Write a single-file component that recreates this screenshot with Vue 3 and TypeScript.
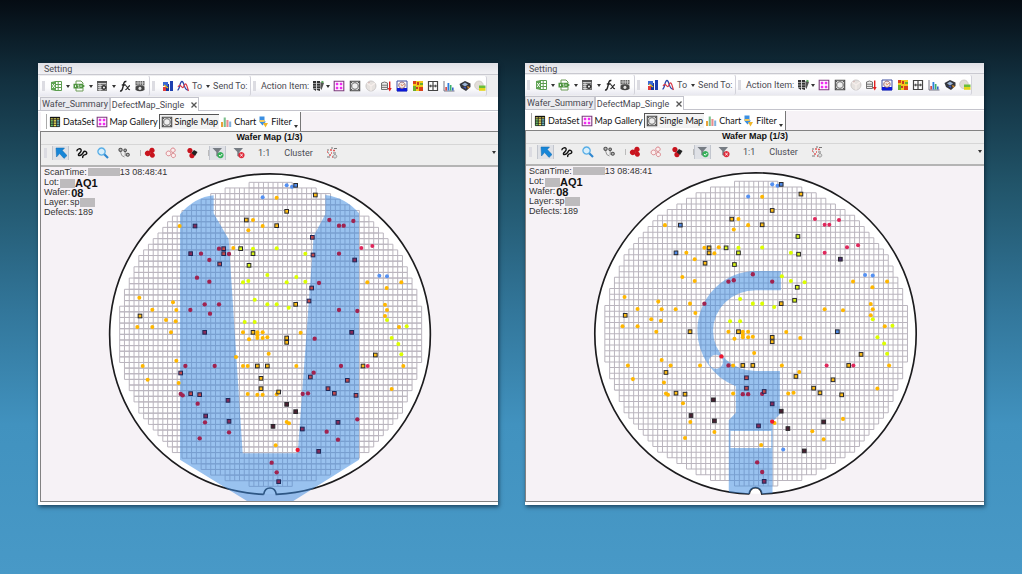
<script setup lang="ts">
interface Shape { d: string; f?: string; s?: string; w?: number }
type Point = [number, number, string]

const icons: Record<string, Shape[]> = {
  excel: [
    { d: 'M5 1.5H11.5V10.5H5Z M8.2 1.5V10.5 M5 4.5H11.5 M5 7.5H11.5', f: '#fff', s: '#5d9c50', w: 1 },
    { d: 'M1 2L6 1V11L1 10Z', f: '#5fa353' },
    { d: 'M2.2 4L4.8 8 M4.8 4L2.2 8', s: '#fff', w: 0.9 },
  ],
  export: [
    { d: 'M3 4V1H8L10 3V4 M3 8V11H10V8', f: '#fff', s: '#6a9a55', w: 1 },
    { d: 'M0.5 3.8H9.5L11.8 6L9.5 8.4H0.5Z', f: '#4f9440' },
    { d: 'M2.5 5.2V7 M4.6 5.2H6.2 M5 7H6.5 M8 5.2V7', s: '#fff', w: 0.9 },
  ],
  sheet: [
    { d: 'M1 1H11V11H1Z', f: '#777' },
    { d: 'M2 3.5H10 M2 5.5H10 M2 7.5H10 M2 9.5H10 M4 1V11', s: '#e8e8e8', w: 0.7 },
    { d: 'M1 1H11V3H1Z', f: '#555' },
    { d: 'M8 5A2.5 2.5 0 1 1 7.9 5Z', f: '#333' },
    { d: 'M8 6.6A1 1 0 1 1 7.9 6.6Z', f: '#eee' },
  ],
  fx: [
    { d: 'M1 11C3 11.5 3.5 9 4.2 6C4.8 3 5.2 1 7.4 1.5 M2.8 5H6.8', s: '#222', w: 1.4 },
    { d: 'M6.5 5.8C8.5 5.3 8.7 10.5 11 9.6 M11 5.6C9.5 5.5 8.2 9.8 6.3 9.8', s: '#222', w: 1.1 },
  ],
  view: [
    { d: 'M1.5 1H10.5V5.5H1.5Z', f: '#666' },
    { d: 'M2 3H10 M4 1V5 M6.3 1V5 M8.5 1V5', s: '#ddd', w: 0.7 },
    { d: 'M1.5 6.5Q6 4 10.5 6.5V10Q6 12.5 1.5 10Z', f: '#444' },
    { d: 'M6 6.8A1.6 1.6 0 1 1 5.9 6.8Z', f: '#ddd' },
  ],
  bars: [
    { d: 'M1 7H4V11H1Z', f: '#e23b3b' }, { d: 'M4 4H7V11H4Z', f: '#15359b' },
    { d: 'M8 1H11V11H8Z', f: '#1c3fb0' }, { d: 'M1 2H6V6H1Z', f: '#3b69d4' },
    { d: 'M2 5L6 8', s: '#e8c02a', w: 1.2 },
  ],
  curve: [
    { d: 'M0.5 10C3 10 2.5 1.5 5 1.5S6.5 10 11 10', s: '#2b46a8', w: 1.3 },
    { d: 'M1 7C4 2 5 11 7 6S10 6 11.5 11', s: '#d93a48', w: 1.2 },
  ],
  plates: [
    { d: 'M1 1H4V11L1 9Z M4.8 1H8V11L4.8 10Z', f: '#333' },
    { d: 'M1 3.5H8 M1 6H8 M1 8.5H8', s: '#ddd', w: 0.6 },
    { d: 'M8.5 2L12 3L9.5 10L8.3 8Z', f: '#555' }, { d: 'M9.5 1.5L11.5 2.5', s: '#4a9a4a', w: 1.4 },
  ],
  gallery: [
    { d: 'M1.2 1.2H10.8V10.8H1.2Z', f: '#fff', s: '#7d3a7d', w: 1.1 },
    { d: 'M2.8 2.8H5.3V5.3H2.8Z M6.8 2.8H9.3V5.3H6.8Z M2.8 6.8H5.3V9.3H2.8Z M6.8 6.8H9.3V9.3H6.8Z', f: '#f22af2' },
  ],
  single: [
    { d: 'M1.3 1.3H10.7V10.7H1.3Z', f: '#d4d4d4', s: '#4a4a4a', w: 1.1 },
    { d: 'M6 2.7A3.3 3.3 0 1 1 5.9 2.7Z', f: '#eee', s: '#666', w: 1 },
    { d: 'M2 2H3V3H2Z M9 2H10V3H9Z M2 9H3V10H2Z M9 9H10V10H9Z', f: '#555' },
  ],
  disc: [
    { d: 'M6 1A5 5 0 1 1 5.9 1Z', f: '#e6e2df', s: '#c2bebe', w: 0.8 },
    { d: 'M6 6L2 3M6 6L10 3M6 6V11', s: '#f6eeec', w: 1.2 }, { d: 'M3 3L5 2', s: '#c9a0a0', w: 0.7 },
  ],
  stack: [
    { d: 'M1.5 3Q4.5 1 7.5 3V9.5H1.5Z M1.5 5.2H7.5 M1.5 7.4H7.5', f: '#ececec', s: '#666', w: 0.9 },
    { d: 'M9.7 1.5V9', s: '#e02020', w: 1.4 }, { d: 'M7.7 8H11.7L9.7 11.5Z', f: '#e02020' },
  ],
  region: [
    { d: 'M1 1H11V11H1Z', f: '#fff', s: '#3c4ca0', w: 1 }, { d: 'M1 8H11V11.3H1Z', f: '#0c18d8' },
    { d: 'M6 2A3.2 3.2 0 1 1 5.9 2Z', f: '#f1e5e2', s: '#8a5a68', w: 0.9 }, { d: 'M5 4L6 6L8 4', s: '#e08a5a', w: 0.8 },
  ],
  heat: [
    { d: 'M1 1H11V11H1Z', f: '#f2c81c' }, { d: 'M1 1H4V4H1Z M7 7H11V11H7Z', f: '#d9401c' },
    { d: 'M1 6H4V11H1Z M8 3H11V5H8Z', f: '#6bae2c' }, { d: 'M5 2H7V5H5Z M4 7H6V9H4Z', f: '#c43a20' },
  ],
  split: [
    { d: 'M1.5 1.5H10.5V10.5H1.5Z M6 1.5V10.5', f: '#fff', s: '#444', w: 1.2 },
    { d: 'M2 6H10 M3.7 4.7V7.3 M8.3 4.7V7.3', s: '#444', w: 1 },
  ],
  histogram: [
    { d: 'M1 1V11H11.5', s: '#667', w: 0.9 }, { d: 'M2.3 7H4V10.5H2.3Z', f: '#d84a4a' },
    { d: 'M4.5 3H6.3V10.5H4.5Z', f: '#2f7ddd' }, { d: 'M6.8 5H8.5V10.5H6.8Z', f: '#3aae6c' }, { d: 'M9 7.5H10.6V10.5H9Z', f: '#3763c8' },
  ],
  palette: [
    { d: 'M0.5 4L6 1L11.5 3.5V7L7 11L2 8Z', f: '#34373d' }, { d: 'M3 4.5L6 2.5L9 4.5L6 6.5Z', f: '#9bb4d6' },
    { d: 'M8 6L11 7L9 9Z', f: '#d88a2a' }, { d: 'M4 7H7V9Z', f: '#3b52c0' },
  ],
  layer: [
    { d: 'M5 1A4.3 4.3 0 1 1 4.9 1Z', f: '#e2ddd8', s: '#c6c0bc', w: 0.7 },
    { d: 'M5 5.5H11.5V8H5Z', f: '#6bbf3a' }, { d: 'M5 8H11.5V10.8H5Z', f: '#e4d51c' },
  ],
  dataset: [
    { d: 'M1 1H11V11H1Z', f: '#f1e65a' }, { d: 'M1 4.2H4.3V11H1Z', f: '#69c46a' }, { d: 'M7.6 4H11V11H7.6Z', f: '#69bcc4' },
    { d: 'M1.4 1.4H10.6V10.6H1.4Z M1 3.7H11 M1 6H11 M1 8.3H11 M4.3 1V11 M7.6 1V11', s: '#222', w: 0.8 },
    { d: 'M1 1.6H11', s: '#111', w: 1.4 },
  ],
  chart: [
    { d: 'M1 6H3V11H1Z', f: '#e8a23a' }, { d: 'M3.7 1.5H5.8V11H3.7Z', f: '#7cc08c' },
    { d: 'M6.4 4H8.5V11H6.4Z', f: '#e88d8d' }, { d: 'M9.2 5.5H11.2V11H9.2Z', f: '#7fb0dc' },
  ],
  filterdown: [
    { d: 'M2.5 0.5H7.5V5.5H9L5.5 9.5L2.5 6Z', f: '#3b8fe2' }, { d: 'M6 7H11L8.5 11.5Z', f: '#f0b62a' }, { d: 'M2.5 4H7.5V6H2.5Z', f: '#f2c95c' },
  ],
  pointer: [{ d: 'M1 1H9.5L7.3 3.5L12 8.6L9 11.4L4.6 6.6L1.5 10Z', f: '#1686d8', s: '#1069ae', w: 0.5 }],
  lasso: [
    { d: 'M0.8 4.2C1 1.6 4.8 0.8 5.2 3.2S2.6 6.2 2.4 7.6S4.2 9 6 7.2S7.4 3.6 9.4 4.4S11.2 7.2 9.4 7.6S6.2 9 6.8 11', s: '#111', w: 1.4 },
  ],
  zoom: [
    { d: 'M7 7L11 11', s: '#2e86cf', w: 2.2 }, { d: 'M4.6 1A3.6 3.6 0 1 1 4.5 1Z', f: '#d7eefb', s: '#58aee6', w: 1.3 },
  ],
  nodes: [
    { d: 'M2.6 1.2A1.6 1.6 0 1 1 2.5 1.2Z M7.2 2A1.3 1.3 0 1 1 7.1 2Z M9.8 6.2A1.5 1.5 0 1 1 9.7 6.2Z', f: '#bbb', s: '#555', w: 1.1 },
    { d: 'M2.6 5Q3 9.5 6.5 10 M7.2 5V9', s: '#888', w: 0.9 },
  ],
  blobs: [
    { d: 'M8 0.8A2.7 2.7 0 1 1 7.9 0.8Z M3.8 3.4A2.9 2.9 0 1 1 3.7 3.4Z M8.4 5.8A2.5 2.5 0 1 1 8.3 5.8Z', f: '#c8141e' },
  ],
  blobsline: [
    { d: 'M8 1A2.2 2.2 0 1 1 7.9 1Z M3.6 4A2.4 2.4 0 1 1 3.5 4Z M8.4 6.4A2.1 2.1 0 1 1 8.3 6.4Z', f: '#fbeeee', s: '#d9848a', w: 1 },
  ],
  blobsmix: [
    { d: 'M4 1A2.6 2.6 0 1 1 3.9 1Z M6 6A2.6 2.6 0 1 1 5.9 6Z', f: '#c8141e' },
    { d: 'M8 3L11.5 5L9 9L5.5 6Z', f: '#222' },
  ],
  funnelok: [
    { d: 'M0.5 1H10L6.5 5V10L4.3 9V5Z', f: '#777d84' }, { d: 'M8.5 5A3.1 3.1 0 1 1 8.4 5Z', f: '#36b05a' },
    { d: 'M7 8L8.2 9.3L10.2 7', s: '#fff', w: 1 },
  ],
  funnelno: [
    { d: 'M0.5 1H10L6.5 5V10L4.3 9V5Z', f: '#777d84' }, { d: 'M8.5 5A3.1 3.1 0 1 1 8.4 5Z', f: '#e02a3a' },
    { d: 'M7.3 7L9.7 9.3M9.7 7L7.3 9.3', s: '#fff', w: 1 },
  ],
  cluster: [
    { d: 'M1 3H3 M5 1H7 M8 1.5H11 M1 10H4 M7 6H10 M2 6H3', s: '#777', w: 1.2 },
    { d: 'M4 3H6 M7 3.5H9 M1 5H2 M5 6H6 M3 8H5 M6 10H7', s: '#e05a5a', w: 1.4 },
    { d: 'M9 7.5A1.8 1.8 0 1 1 8.9 7.5Z', f: '#ddd', s: '#888', w: 0.8 },
  ],
}

const mainIcons = ['excel', 'export', 'sheet']
const actionIcons = ['gallery', 'single', 'disc', 'stack', 'region', 'heat', 'split', 'histogram', 'palette', 'layer']
const views = [
  { icon: 'dataset', text: 'DataSet' },
  { icon: 'gallery', text: 'Map Gallery' },
  { icon: 'single', text: 'Single Map', on: true },
  { icon: 'chart', text: 'Chart' },
  { icon: 'filterdown', text: 'Filter', menu: true },
]
const tools = [
  { icon: 'pointer', on: true }, { icon: 'lasso' }, { icon: 'zoom' }, { icon: 'nodes', end: true },
  { icon: 'blobs' }, { icon: 'blobsline' }, { icon: 'blobsmix', end: true },
  { icon: 'funnelok', on: true }, { icon: 'funnelno' },
]

// Die grid: 63 x 54 dies, three map units per screen pixel.
const COLS = 63
const ROWS = 54
const DIE_W = 14.38
const DIE_H = 16.89
const GX = 236
const GY = 46
function dieGrid(): string {
  const cx = (COLS * DIE_W) / 2
  const cy = (ROWS * DIE_H) / 2
  const limit = 462
  let d = ''
  for (let r = 0; r < ROWS; r++) {
    const far = Math.max(Math.abs(r * DIE_H - cy), Math.abs((r + 1) * DIE_H - cy))
    const half = Math.sqrt(limit * limit - far * far)
    const skip = Math.max(0, Math.ceil((cx - half) / DIE_W - 0.05))
    const x0 = GX + skip * DIE_W
    const x1 = GX + (COLS - skip) * DIE_W
    const y0 = GY + r * DIE_H
    d += `M${x0} ${y0}H${x1}M${x0} ${y0 + DIE_H}H${x1}`
    for (let c = skip; c <= COLS - skip; c++) d += `M${GX + c * DIE_W} ${y0}v${DIE_H}`
  }
  return d
}
const grid = dieGrid()

// Each defect holds one class letter per map; capitals are drawn as marked dies.
const quadrants: { at: [number, number]; points: Point[] }[] = [
  {
    at: [-15, -21],
    points: [
      [680, 112, 'bb'], [631, 180, 'YY'], [651, 180, 'yy'], [431, 198, 'yy'], [477, 198, 'PB'], [680, 198, 'yy'],
      [637, 211, 'yy'], [549, 266, 'wy'], [563, 266, 'WY'], [592, 264, 'yy'], [614, 266, 'LL'], [651, 266, 'll'],
      [464, 281, 'PB'], [495, 281, 'wy'], [563, 281, 'WY'], [579, 282, 'wy'], [651, 281, 'LL'], [520, 300, 'wy'],
      [551, 312, 'WY'], [639, 316, 'LL'], [694, 345, 'lw'], [483, 353, 'wy'], [520, 365, 'wy'], [621, 367, 'lw'],
      [637, 363, 'lw'], [310, 413, 'yy'], [656, 419, 'll'], [411, 427, 'yy'], [506, 433, 'wy'], [549, 433, 'ww'],
      [694, 433, 'll'], [349, 449, 'yy'], [463, 450, 'wy'], [421, 450, 'yy'], [522, 461, 'wy'], [312, 468, 'YY'],
      [390, 480, 'yy'], [419, 484, 'yy'], [304, 501, 'yy'], [349, 501, 'yy'], [405, 517, 'yy'], [626, 486, 'll'],
      [656, 486, 'll'], [506, 517, 'PY'], [621, 517, 'yy'], [651, 517, 'YY'], [664, 517, 'yy'], [680, 517, 'yy'],
      [664, 526, 'yy'], [664, 534, 'yy'], [680, 534, 'yy'], [694, 532, 'yy'], [639, 538, 'yy'],
    ],
  },
  {
    at: [669, -21],
    points: [
      [68, 76, 'bb'], [84, 80, 'bb'], [95, 76, 'BB'], [38, 113, 'yy'], [154, 105, 'YY'], [68, 154, 'YY'],
      [38, 197, 'YY'], [196, 180, 'wr'], [268, 183, 'wr'], [225, 197, 'wr'], [239, 197, 'wr'], [145, 232, 'WL'],
      [38, 265, 'll'], [124, 281, 'll'], [147, 285, 'WL'], [225, 281, 'wr'], [292, 264, 'rr'], [325, 258, 'rr'],
      [272, 300, 'PD'], [97, 351, 'll'], [68, 367, 'lw'], [124, 365, 'll'], [165, 369, 'wl'], [143, 384, 'WL'],
      [346, 347, 'bb'], [369, 349, 'bb'], [310, 367, 'yy'], [412, 367, 'yy'], [368, 384, 'yy'], [135, 423, 'WL'],
      [38, 433, 'll'], [74, 443, 'll'], [95, 433, 'YY'], [363, 434, 'yy'], [369, 450, 'yy'], [363, 468, 'yy'],
      [369, 480, 'll'], [225, 450, 'wy'], [280, 453, 'wy'], [405, 501, 'yy'], [428, 499, 'll'], [110, 518, 'yy'],
      [263, 517, 'PB'], [68, 534, 'YY'], [152, 536, 'wy'], [383, 534, 'll'],
    ],
  },
  {
    at: [-15, 504],
    points: [
      [698, 56, 'yy'], [600, 66, 'yx'], [421, 77, 'yy'], [320, 93, 'yy'], [448, 93, 'wy'], [536, 93, 'wy'],
      [621, 93, 'yw'], [635, 93, 'yy'], [664, 93, 'YY'], [694, 93, 'YY'], [434, 114, 'WY'], [335, 134, 'yy'],
      [428, 144, 'yy'], [675, 130, 'YW'], [675, 161, 'YW'], [434, 177, 'wy'], [440, 181, 'wy'], [464, 176, 'WY'],
      [491, 179, 'WY'], [635, 177, 'yy'], [664, 179, 'yw'], [680, 179, 'yw'], [485, 206, 'wy'], [576, 196, 'PK'],
      [509, 243, 'PK'], [507, 262, 'wy'], [579, 259, 'PK'], [579, 292, 'wy'], [491, 310, 'wy'],
    ],
  },
  {
    at: [669, 504],
    points: [
      [68, 22, 'YY'], [403, 27, 'll'], [412, 58, 'll'], [334, 60, 'YY'], [97, 93, 'yy'], [231, 93, 'wr'],
      [297, 93, 'YY'], [311, 93, 'rr'], [418, 93, 'yy'], [149, 113, 'wy'], [139, 126, 'WY'], [250, 136, 'WY'],
      [192, 161, 'WY'], [211, 175, 'WY'], [276, 181, 'WY'], [383, 162, 'yy'], [38, 178, 'yw'], [44, 171, 'YW'],
      [116, 177, 'wy'], [132, 175, 'wy'], [68, 208, 'KP'], [95, 230, 'KK'], [280, 253, 'wy'], [75, 265, 'yy'],
      [68, 261, 'yx'], [222, 262, 'PK'], [27, 274, 'KP'], [115, 282, 'PK'], [188, 290, 'wy'], [222, 314, 'wy'],
      [35, 331, 'yy'], [101, 345, 'xb'], [164, 349, 'PK'], [23, 383, 'ww'], [38, 412, 'ww'], [44, 440, 'PP'],
    ],
  },
]

const dotFill: Record<string, string> = {
  y: '#ffb700', l: '#dcff00', b: '#5591f2', r: '#e0285c', w: '#a02350', x: '#ee1730',
}
const dieFill: Record<string, string> = {
  Y: '#ffbd14', L: '#d9f716', B: '#4f8be8', W: '#c24a4a', P: '#872a58', K: '#4a1f30', D: '#4b2d72',
}
const isDie = (k: string) => k in dieFill
const edge = (k: string) => ('WP'.includes(k) ? '#1f2858' : '#2a2a2e')

const panels = [
  {
    id: 'a',
    overlay:
      'M417 142Q462 90 518 85V139L563 217L605 859H770L818 207L853 142V84Q915 92 954 139V878L757 1002H618L417 878Z',
  },
  {
    id: 'b',
    overlay:
      'M763 314H688A175 179 0 0 0 513 493A175 179 0 0 0 628 659V739L607 761V977L669 982Q672 963 687 963T706 982L738 980V765L760 743V614H688A128 121 0 0 1 688 372H763Z' +
      'M612 793H734V844H612Z M568 565A21 21 0 1 0 569 565Z',
  },
]
</script>

<template>
  <main class="page">
    <section v-for="(p, i) in panels" :key="p.id" class="panel" :class="p.id">
      <div class="window">
        <header class="setting">Setting</header>

        <div class="strip">
          <div class="group first">
            <i class="grip"></i>
            <template v-for="n in mainIcons" :key="n">
              <button class="ib" :aria-label="n">
                <svg class="ic" viewBox="0 0 12 12"><path v-for="(s, k) in icons[n]" :key="k" :d="s.d" :fill="s.f || 'none'" :stroke="s.s || 'none'" :stroke-width="s.w || 0" /></svg>
              </button>
              <button class="caret" :aria-label="n + ' menu'"></button>
            </template>
            <button v-for="n in ['fx', 'view']" :key="n" class="ib" :aria-label="n">
              <svg class="ic" viewBox="0 0 12 12"><path v-for="(s, k) in icons[n]" :key="k" :d="s.d" :fill="s.f || 'none'" :stroke="s.s || 'none'" :stroke-width="s.w || 0" /></svg>
            </button>
          </div>
          <div class="group second">
            <i class="grip"></i>
            <button v-for="n in ['bars', 'curve']" :key="n" class="ib" :aria-label="n">
              <svg class="ic" viewBox="0 0 12 12"><path v-for="(s, k) in icons[n]" :key="k" :d="s.d" :fill="s.f || 'none'" :stroke="s.s || 'none'" :stroke-width="s.w || 0" /></svg>
            </button>
            <button class="tx">To</button>
            <button class="caret" aria-label="To menu"></button>
            <span class="tx">Send To:</span>
          </div>
          <div class="group third">
            <i class="grip"></i>
            <span class="tx">Action Item:</span>
            <button class="ib" aria-label="plates">
              <svg class="ic" viewBox="0 0 12 12"><path v-for="(s, k) in icons.plates" :key="k" :d="s.d" :fill="s.f || 'none'" :stroke="s.s || 'none'" :stroke-width="s.w || 0" /></svg>
            </button>
            <button class="caret" aria-label="plates menu"></button>
            <div class="actions">
              <button v-for="n in actionIcons" :key="n" class="ib" :aria-label="n">
                <svg class="ic" viewBox="0 0 12 12"><path v-for="(s, k) in icons[n]" :key="k" :d="s.d" :fill="s.f || 'none'" :stroke="s.s || 'none'" :stroke-width="s.w || 0" /></svg>
              </button>
            </div>
          </div>
        </div>

        <nav class="tabs" role="tablist">
          <button class="tab" role="tab" aria-selected="false">Wafer_Summary</button>
          <button class="tab active" role="tab" aria-selected="true">DefectMap_Single<svg class="close" viewBox="0 0 6 6"><path d="M0.5 0.5L5.5 5.5M5.5 0.5L0.5 5.5" stroke="#555" stroke-width="1.3" /></svg></button>
        </nav>

        <div class="views">
          <div class="viewbar">
            <button v-for="v in views" :key="v.text" class="view" :class="{ on: v.on }">
              <svg class="ic" viewBox="0 0 12 12"><path v-for="(s, k) in icons[v.icon]" :key="k" :d="s.d" :fill="s.f || 'none'" :stroke="s.s || 'none'" :stroke-width="s.w || 0" /></svg>
              <span>{{ v.text }}</span>
              <i v-if="v.menu" class="caretmark"></i>
            </button>
          </div>
        </div>

        <div class="body">
          <h2 class="title">Wafer Map (1/3)</h2>
          <div class="tools">
            <i class="grip"></i>
            <button v-for="t in tools" :key="t.icon" class="tool" :class="{ on: t.on, end: t.end }" :aria-label="t.icon">
              <svg class="ic" viewBox="0 0 12 12"><path v-for="(s, k) in icons[t.icon]" :key="k" :d="s.d" :fill="s.f || 'none'" :stroke="s.s || 'none'" :stroke-width="s.w || 0" /></svg>
            </button>
            <button class="word">1:1</button>
            <button class="word">Cluster</button>
            <button class="ib" aria-label="cluster map">
              <svg class="ic" viewBox="0 0 12 12"><path v-for="(s, k) in icons.cluster" :key="k" :d="s.d" :fill="s.f || 'none'" :stroke="s.s || 'none'" :stroke-width="s.w || 0" /></svg>
            </button>
            <button class="caret more" aria-label="More"></button>
          </div>

          <div class="map">
            <svg class="wafer" viewBox="0 0 1371 1002" preserveAspectRatio="xMinYMin meet">
              <circle cx="687.5" cy="501" r="480" fill="#fff" />
              <path :d="grid" fill="none" stroke="#bab5be" stroke-width="3" />
              <path d="M668 982A481 481 0 1 1 706 982Q703 963 687 963T668 982" fill="none" stroke="#1c1c1e" stroke-width="5" />
              <path :d="p.overlay" fill="#3f8be0" fill-opacity="0.53" fill-rule="evenodd" />
              <g v-for="(q, n) in quadrants" :key="n" :transform="`translate(${q.at[0]} ${q.at[1]})`">
                <template v-for="(pt, k) in q.points" :key="k">
                  <rect v-if="isDie(pt[2][i])" :x="pt[0] - 5.5" :y="pt[1] - 5.5" width="11" height="11" :fill="dieFill[pt[2][i]]" :stroke="edge(pt[2][i])" stroke-width="3" />
                  <circle v-else :cx="pt[0]" :cy="pt[1]" :r="'wx'.includes(pt[2][i]) ? 6.5 : 6" :fill="dotFill[pt[2][i]]" />
                </template>
              </g>
            </svg>
            <dl class="info">
              <div><dt>ScanTime:</dt><dd><i class="mask wide"></i>13 08:48:41</dd></div>
              <div><dt>Lot:</dt><dd class="big"><i class="mask"></i>AQ1</dd></div>
              <div><dt>Wafer:</dt><dd class="big">08</dd></div>
              <div><dt>Layer:</dt><dd>sp<i class="mask"></i></dd></div>
              <div><dt>Defects:</dt><dd>189</dd></div>
            </dl>
          </div>
        </div>
      </div>
    </section>
  </main>
</template>

<style>
body { margin: 0; }
</style>

<style scoped>
* { box-sizing: border-box; }
button {
  border: 0; padding: 0; margin: 0; background: none; color: inherit; font: inherit;
  display: flex; align-items: center; justify-content: center; flex: none;
}
.page {
  min-height: 100vh;
  display: grid;
  grid-template-columns: 460fr 459fr;
  gap: 27px;
  align-items: start;
  padding: 63px 38px 60px;
  font-family: Roboto, "Noto Sans", sans-serif;
  font-size: 9px;
  line-height: 12px;
  color: #4a4a52;
  background: linear-gradient(180deg, #050c13 0%, #12303f 14%, #215469 32%, #32769a 54%, #4192bf 74%, #4899c7 100%);
}
.panel {
  overflow: hidden;
  background: #fff;
  box-shadow: 1px 2px 4px rgba(0, 15, 30, 0.6);
  white-space: nowrap;
}
.setting {
  height: 12px;
  padding-left: 6px;
  line-height: 13px;
  background: linear-gradient(#dfe0e6, #f1f1f4);
  border-bottom: 1px solid #c9c9d0;
}
.b .window { margin-left: -2px; }
.b .setting { height: 11px; line-height: 12px; }

.strip { height: 22px; padding: 1px 0 1px 2px; display: flex; background: #eeeef0; }
.group {
  display: flex; align-items: center; gap: 3px; flex: none;
  background: linear-gradient(#fff, #fcfcfd 60%, #e8e8f0);
  border-right: 1px solid #d2d2da;
  border-radius: 0 2px 2px 0;
}
.first { width: 110px; }
.second { width: 101px; }
.third { width: 236px; }
.grip { width: 3px; height: 10px; margin: 0 4px 0 2px; background: #dcdce2; flex: none; }
.first .grip { margin-right: 2px; }
.third .grip { margin-right: 2px; }
.ib { width: 12px; height: 12px; }
.ic { width: 12px; height: 12px; display: block; flex: none; }
.caret { width: 5px; height: 12px; }
.third .caret { margin-left: -2px; }
.caret::before, .caretmark {
  content: ""; border: 2px solid transparent; border-top: 3px solid #333; border-bottom: 0;
}
.tx { font-size: 9px; flex: none; }
.actions { display: flex; justify-content: space-between; width: 153px; flex: none; }

.tabs { height: 14px; display: flex; align-items: stretch; padding-left: 2px; border-bottom: 1px solid #c4c4cc; background: #fff; }
.tab { width: 70px; height: 13px; background: #ebebef; border: 1px solid #c4c4cc; border-bottom: 0; }
.tab.active { width: 89px; height: 14px; background: #fff; gap: 7px; }
.close { width: 6px; height: 6px; }

.views { height: 20px; background: #f6f2f6; display: flex; padding-left: 3px; border-top: 1px solid #fff; }
.viewbar {
  display: flex; align-items: flex-start; gap: 1px; width: 260px; padding: 2px 0 0 8px;
  background: #fff; border-right: 1px solid #777; color: #111; font-family: Lato, sans-serif;
}
.view { gap: 2px; height: 15px; }
.view:first-child { border-left: 1px solid #aaa; margin-left: -3px; padding-left: 2px; }
.view.on { background: #f3f3f3; border-top: 1px solid #555; border-left: 1px solid #555; padding: 0 1px; }
.caretmark { align-self: flex-end; margin-bottom: 1px; }

.body { margin: 0 0 3px 2px; border: 1px solid #828282; border-right: 0; background: #f6f2f6; }
.title {
  margin: 0; height: 13px; font: 700 9px/11px "Liberation Sans", Arial, sans-serif; color: #111;
  text-align: center; background: #eee; border-bottom: 1px solid #d6d6d6;
}
.tools { height: 22px; padding-bottom: 5px; display: flex; align-items: center; background: #eee; border-bottom: 2px solid #b4b4b4; }
.tools .grip { margin: 0 5px 0 3px; }
.tool { width: 17px; height: 14px; margin-right: 4px; }
.tool.on { background: #dfe1e6; border: solid #c2c6ce; border-width: 0 1px; }
.tool.end { margin-right: 9px; }
.tool.end + .tool { box-shadow: -5px 0 0 -4px #bbb; }
.word { margin: 0 7px; }
.word + .ib { margin-left: 6px; }
.more { margin-left: auto; margin-right: 2px; }

.map { display: grid; }
.wafer { grid-area: 1 / 1; width: 100%; display: block; }
.info {
  grid-area: 1 / 1; margin: 0; padding: 0 0 0 3px; align-self: start;
  font: 9px/10px "Liberation Sans", Arial, sans-serif; color: #333;
}
.info div { display: flex; height: 10px; gap: 1px; align-items: center; }
.info dd { margin: 0; display: flex; align-items: center; }
.info .big { font-size: 11px; font-weight: 700; color: #111; padding-top: 2px; }
.mask { width: 15px; height: 9px; background: #bdbbbd; }
.mask.wide { width: 32px; height: 8px; }
</style>
